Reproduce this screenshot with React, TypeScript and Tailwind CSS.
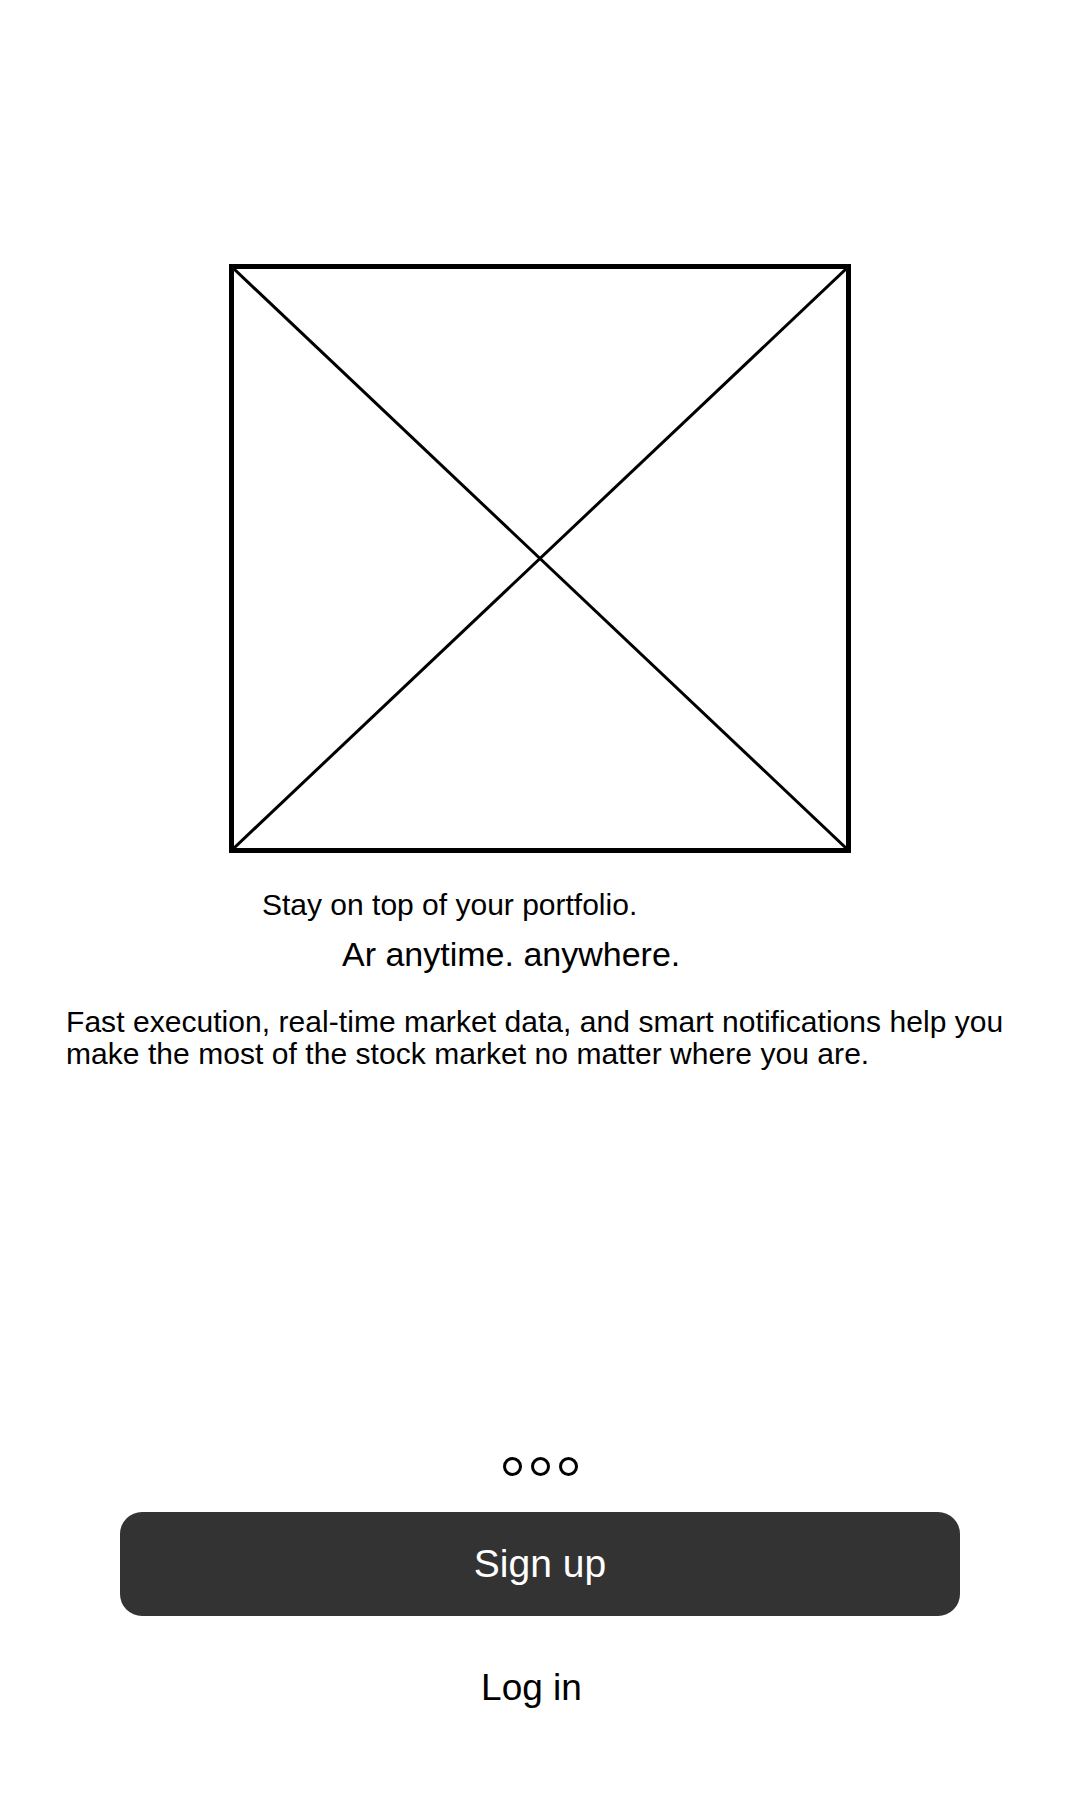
export default function App() {
  return (
    <div className="w-[1080px] h-[1800px] bg-white flex flex-col font-['Liberation_Sans',Arial,sans-serif] text-black">
      <div className="pt-[264px] flex justify-center">
        <div className="relative w-[622px] h-[589px] border-[5px] border-black">
          <svg className="absolute inset-0 w-full h-full" viewBox="0 0 612 579" preserveAspectRatio="none">
            <line x1="0" y1="0" x2="612" y2="579" stroke="black" strokeWidth="3" />
            <line x1="612" y1="0" x2="0" y2="579" stroke="black" strokeWidth="3" />
          </svg>
        </div>
      </div>

      <p className="mt-[34px] pl-[262px] text-[30px] leading-[36px]">Stay on top of your portfolio.</p>
      <p className="mt-[11px] pl-[342px] text-[34px] leading-[40px]">Ar anytime. anywhere.</p>
      <p className="mt-[32px] pl-[66px] pr-[60px] text-[30px] leading-[32px] tracking-[0.05px]">
        Fast execution, real-time market data, and smart notifications help you make the most of the stock market no matter where you are.
      </p>

      <div className="mt-[387px] flex justify-center gap-[9px]">
        <span className="w-[19px] h-[19px] rounded-full border-[3px] border-black" />
        <span className="w-[19px] h-[19px] rounded-full border-[3px] border-black" />
        <span className="w-[19px] h-[19px] rounded-full border-[3px] border-black" />
      </div>

      <div className="mt-[36px] flex justify-center">
        <button className="w-[840px] h-[104px] rounded-[22px] bg-[#333333] text-white text-[39px]">Sign up</button>
      </div>

      <div className="mt-[50px] flex justify-center">
        <span className="mr-[17px] text-[37px] leading-[44px]">Log in</span>
      </div>
    </div>
  );
}
